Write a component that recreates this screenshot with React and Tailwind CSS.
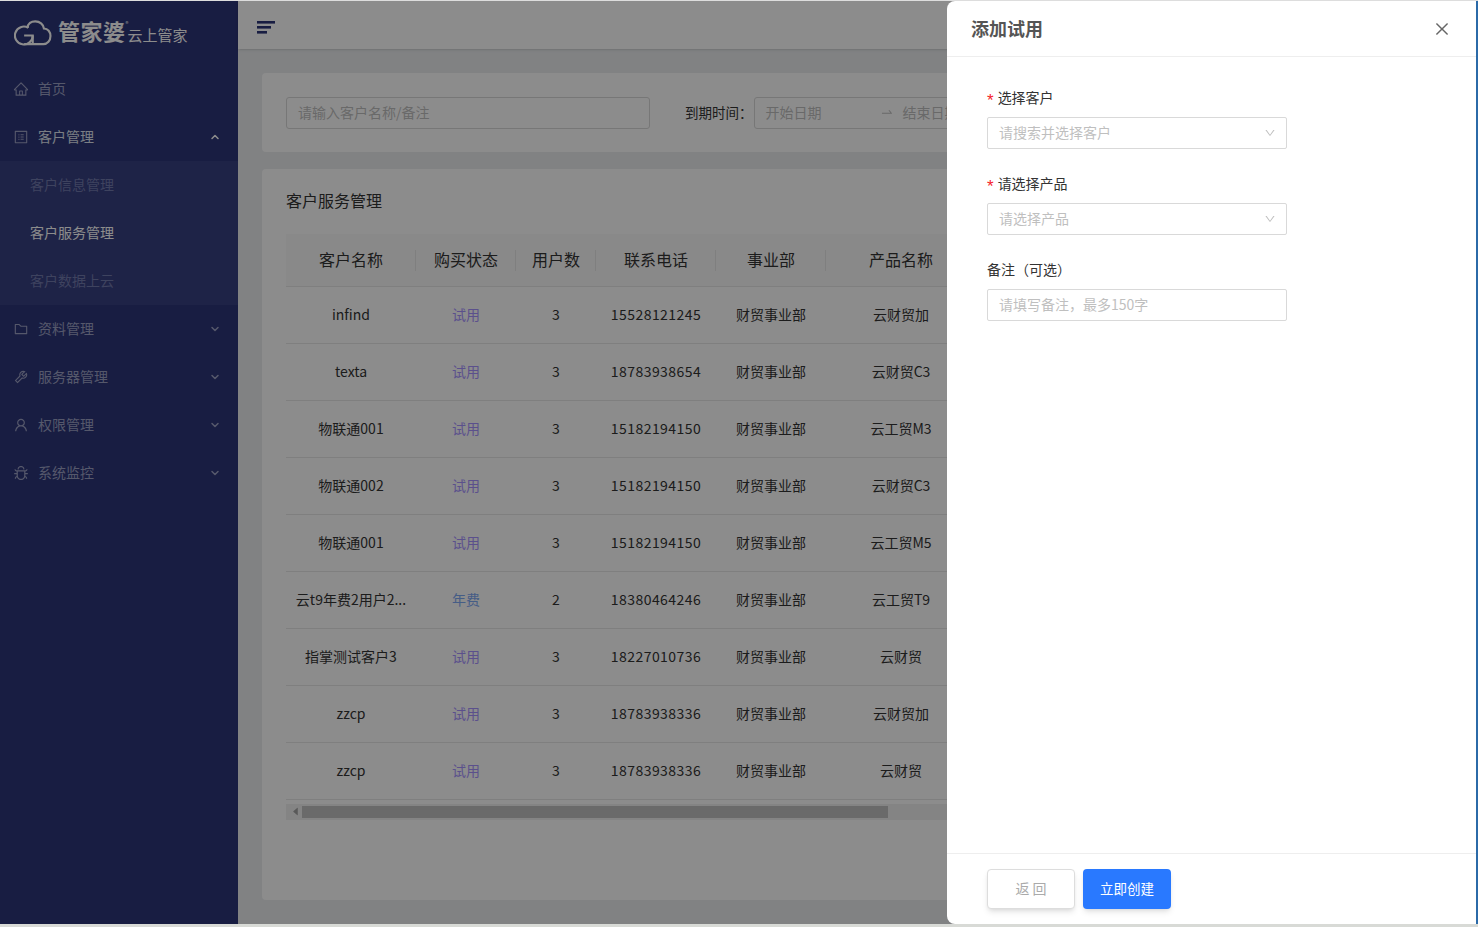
import React from 'react';
import {
  AiOutlineHome,
  AiOutlineProfile,
  AiOutlineFolder,
  AiOutlineTool,
  AiOutlineUser,
  AiOutlineBug,
  AiOutlineClose,
  AiOutlineSwapRight,
  AiOutlineDown,
  AiFillCaretLeft,
} from 'react-icons/ai';
import { ChevronDown, ChevronUp } from 'lucide-react';

const rows = [
  { name: 'infind', status: '试用', users: 3, phone: '15528121245', product: '云财贸加' },
  { name: 'texta', status: '试用', users: 3, phone: '18783938654', product: '云财贸C3' },
  { name: '物联通001', status: '试用', users: 3, phone: '15182194150', product: '云工贸M3' },
  { name: '物联通002', status: '试用', users: 3, phone: '15182194150', product: '云财贸C3' },
  { name: '物联通001', status: '试用', users: 3, phone: '15182194150', product: '云工贸M5' },
  { name: '云t9年费2用户2...', status: '年费', users: 2, phone: '18380464246', product: '云工贸T9' },
  { name: '指掌测试客户3', status: '试用', users: 3, phone: '18227010736', product: '云财贸' },
  { name: 'zzcp', status: '试用', users: 3, phone: '18783938336', product: '云财贸加' },
  { name: 'zzcp', status: '试用', users: 3, phone: '18783938336', product: '云财贸' },
];

const headers = ['客户名称', '购买状态', '用户数', '联系电话', '事业部', '产品名称'];

const Logo = () => (
  <div className="flex h-16 items-start pl-[14px] pt-[19px] text-white">
    <svg width="38" height="26" viewBox="0 0 37.5 25" fill="none" stroke="currentColor" strokeWidth="2.1">
      <path d="M14 7.3 A8.8 8.8 0 1 0 18.5 15 H10" />
      <path d="M13.5 7.5 C13.5 3 17 1 21 1 C25.5 1 29 4 29.5 8 C33.5 8 36 11.5 36 15.5 C36 20 33 23.5 29 23.5 H10" />
      <path d="M18.5 15 V23" />
    </svg>
    <span className="ml-[6px] mt-[-4px] text-[22px] font-bold leading-[28px] tracking-[0.5px]">管家婆</span>
    <span className="mt-[1px] w-[2px] text-[6px] leading-[6px]">®</span>
    <span className="mt-[5px] text-[15px] leading-[20px]">云上管家</span>
  </div>
);

const MenuItem = ({ icon: Icon, label, open }) => (
  <div className="flex h-12 items-center pl-[13px] pr-[17px] text-[#9ca1c4]">
    <Icon size={16} />
    <span className={`ml-[9px] flex-1 pb-[2px] text-sm ${open ? 'text-[#dfe5f0]' : ''}`}>{label}</span>
    {label === '首页' ? null : open ? (
      <ChevronUp size={12} strokeWidth={3} className="text-white" />
    ) : (
      <ChevronDown size={12} strokeWidth={3} />
    )}
  </div>
);

const SubItem = ({ label, active }) => (
  <div className={`flex h-12 items-center pb-[2px] pl-[30px] text-sm ${active ? 'text-white' : 'text-[#727aad]'}`}>{label}</div>
);

const Sidebar = () => (
  <aside className="w-[238px] shrink-0 bg-[#2d3578]">
    <Logo />
    <MenuItem icon={AiOutlineHome} label="首页" />
    <MenuItem icon={AiOutlineProfile} label="客户管理" open />
    <div className="bg-[#384081]">
      <SubItem label="客户信息管理" />
      <SubItem label="客户服务管理" active />
      <SubItem label="客户数据上云" />
    </div>
    <MenuItem icon={AiOutlineFolder} label="资料管理" />
    <MenuItem icon={AiOutlineTool} label="服务器管理" />
    <MenuItem icon={AiOutlineUser} label="权限管理" />
    <MenuItem icon={AiOutlineBug} label="系统监控" />
  </aside>
);

const FilterCard = () => (
  <div className="flex h-[79px] items-center rounded-sm bg-white px-6 pt-[1px]">
    <div className="flex h-8 w-[364px] items-center rounded-[3px] border border-[#d9d9d9] pb-[2px] pl-[11px] text-sm text-[#bfbfbf]">
      请输入客户名称/备注
    </div>
    <span className="ml-[35px] pb-[2px] text-[13.5px] text-[#333]">到期时间：</span>
    <div className="ml-[1px] flex h-8 w-[400px] shrink-0 items-center rounded-[3px] border border-[#d9d9d9] pb-[2px] pl-[11px] text-sm text-[#bfbfbf]">
      <span className="w-[114px]">开始日期</span>
      <AiOutlineSwapRight size={14} />
      <span className="ml-[9px]">结束日期</span>
    </div>
  </div>
);

const CustomerTable = () => (
  <div className="mt-[17px] h-[731px] overflow-hidden rounded-sm bg-white px-6 pt-[19px]">
    <h2 className="h-[46px] text-base leading-6 text-[#333]">客户服务管理</h2>
    <table className="w-[1144px] table-fixed border-collapse text-center text-sm text-[#333]">
      <colgroup>
        <col className="w-[130px]" />
        <col className="w-[100px]" />
        <col className="w-[80px]" />
        <col className="w-[120px]" />
        <col className="w-[110px]" />
        <col className="w-[150px]" />
        <col />
      </colgroup>
      <thead>
        <tr className="h-[52px] border-b border-[#e8e8e8] bg-[#fafafa] text-base">
          {headers.map((h, i) => (
            <th key={h} className="relative pb-[1px] font-normal">
              {h}
              {i < 5 && <span className="absolute right-0 top-[16px] h-[21px] w-px bg-[#e8e8e8]" />}
            </th>
          ))}
          <th />
        </tr>
      </thead>
      <tbody>
        {rows.map((row, i) => (
          <tr key={i} className="h-[57px] border-b border-[#e8e8e8] [&>td]:pb-[2px]">
            <td className="truncate">{row.name}</td>
            <td className={row.status === '年费' ? 'text-[#7fa9f5]' : 'text-[#a793ff]'}>{row.status}</td>
            <td>{row.users}</td>
            <td className="tracking-[0.45px]">{row.phone}</td>
            <td>财贸事业部</td>
            <td>{row.product}</td>
            <td />
          </tr>
        ))}
      </tbody>
    </table>
    <div className="mt-[4px] flex h-4 w-[1144px] items-center bg-[#f1f1f1]">
      <AiFillCaretLeft size={11} className="ml-[3px] w-[13px] text-[#a3a3a3]" />
      <div className="h-3 w-[586px] bg-[#c1c1c1]" />
    </div>
  </div>
);

const Field = ({ label, required, placeholder, arrow, className }) => (
  <div className={className}>
    <div className="flex h-[20px] items-center pb-[2px] text-sm text-[#333]">
      {required && <span className="mr-[4px] mt-[6px] font-['Liberation_Sans'] text-[17px] leading-none text-[#f5222d]">*</span>}
      {label}
    </div>
    <div className="mt-[9px] flex h-8 w-[300px] items-center justify-between rounded-[2px] border border-[#d9d9d9] pb-[3px] pl-[11px] pr-[10px] text-sm text-[#bfbfbf]">
      <span>{placeholder}</span>
      {arrow && <AiOutlineDown size={12} className="mt-[3px] text-[#bfbfbf]" />}
    </div>
  </div>
);

const Drawer = () => (
  <section className="absolute bottom-0 right-0 top-0 flex w-[529px] flex-col rounded-l-lg bg-white">
    <header className="flex h-[56px] items-center justify-between border-b border-[#eeeeee] pl-6 pr-[25px]">
      <h1 className="pb-[2px] text-lg font-bold text-[#555]">添加试用</h1>
      <AiOutlineClose size={18} className="text-[#666]" />
    </header>
    <div className="flex-1 px-10 pt-[31px]">
      <Field label="选择客户" required placeholder="请搜索并选择客户" arrow />
      <Field label="请选择产品" required placeholder="请选择产品" arrow className="mt-[25px]" />
      <Field label="备注（可选）" placeholder="请填写备注，最多150字" className="mt-[25px]" />
    </div>
    <footer className="flex h-[71px] items-start gap-2 border-t border-[#eeeeee] pl-10 pt-[15px]">
      <button className="h-10 w-[88px] rounded-[4px] border border-[#dddddd] bg-white pb-[2px] text-sm text-[#aaaaaa] shadow-md">
        返 回
      </button>
      <button className="h-10 w-[88px] rounded-[4px] bg-[#2979ff] pb-[2px] text-[13.5px] text-white shadow-md">
        立即创建
      </button>
    </footer>
  </section>
);

const App = () => (
  <div className="flex h-[927px] w-[1478px] flex-col overflow-hidden bg-[#d8dad6] font-['Noto_Sans_CJK_SC','Noto_Sans',sans-serif]">
    <div className="h-px shrink-0 bg-[#dddddd]" />
    <div className="flex h-[923px] shrink-0">
      <div className="relative flex h-full w-[1476px] overflow-hidden">
        <Sidebar />
        <main className="min-w-0 flex-1 bg-[#ebedef]">
          <div className="flex h-[48px] items-center bg-white pl-[19px] shadow-sm">
            <svg width="18" height="14" viewBox="0 0 18 14" fill="#2d3578" className="mt-[5px]">
              <rect x="0" y="0" width="18" height="2.6" />
              <rect x="0" y="5" width="14" height="2.6" />
              <rect x="0" y="10" width="10" height="2.6" />
            </svg>
          </div>
          <div className="px-6 pt-[24px]">
            <FilterCard />
            <CustomerTable />
          </div>
        </main>
        <div className="absolute inset-0 bg-black/45" />
        <Drawer />
      </div>
      <div className="w-[2px] bg-[#2b6aa8]" />
    </div>
  </div>
);

export default App;
